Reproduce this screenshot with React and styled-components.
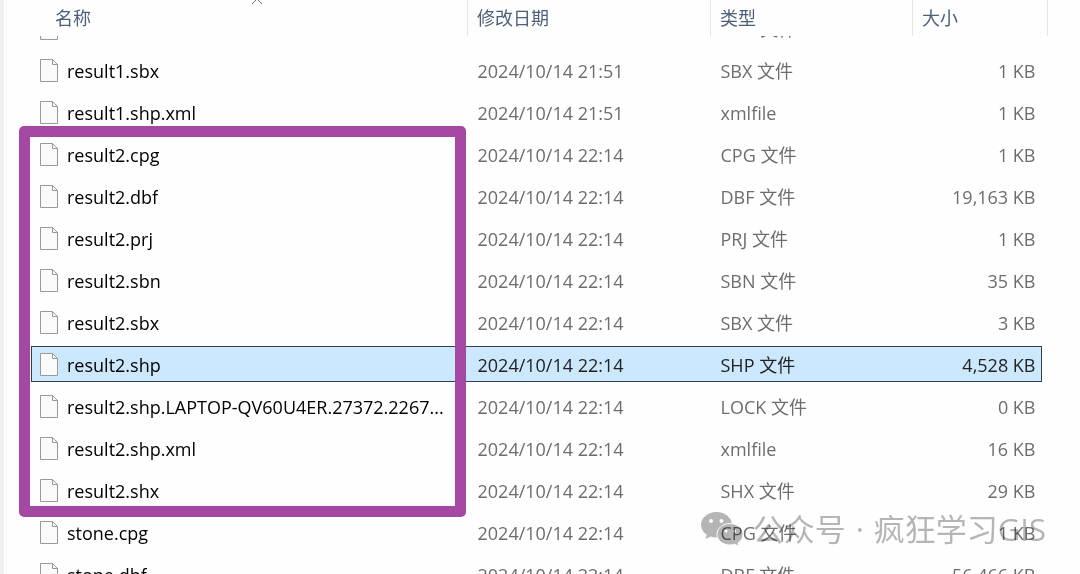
import React from "react";
import styled, { createGlobalStyle, css } from "styled-components";

const GlobalStyle = createGlobalStyle`
  * { box-sizing: border-box; }
  body {
    margin: 0;
    background: #fefefe;
    font-family: "Open Sans", "Noto Sans CJK SC", sans-serif;
    font-size: 18px;
    line-height: 24px;
  }
`;

const Explorer = styled.div`
  position: relative;
  display: flex;
  height: 100vh;
  overflow: hidden;
`;

const PaneEdge = styled.div`
  flex: none;
  width: 7px;
  background: linear-gradient(to right, #f0f0f0 4px, #fefefe 4px, #fefefe 6px, #f6f6f6 6px);
`;

const ListPane = styled.main`
  flex: 1;
  min-width: 0;
  padding: 0 32px 0 24px;
`;

const FileTable = styled.table`
  width: 100%;
  table-layout: fixed;
  border-collapse: collapse;
`;

const Column = styled.col`
  width: ${(p) => p.$width || "auto"};
`;

const HeaderCell = styled.th`
  position: relative;
  height: 36px;
  padding: 0 0 0 ${(p) => (p.$first ? 24 : 9)}px;
  border-right: 1px solid #e5e5e5;
  color: #4c607a;
  font-weight: 400;
  text-align: left;
`;

const SortMark = styled.svg`
  position: absolute;
  top: 0;
  left: calc(50% + 2px);
  width: 12px;
  height: 5px;
`;

const Cell = styled.td`
  padding: ${(p) => (p.$clipped ? "0" : "3px 0")};
  ${(p) => p.$last && "padding-right: 6px;"}
`;

const CellBody = styled.div`
  display: flex;
  align-items: center;
  height: 36px;
  padding: 0 6px 0 ${(p) => (p.$name ? 9 : 10)}px;
  border: 0 solid #35404a;
  color: ${(p) => (p.$name ? "#000" : "#6d6d6d")};
  white-space: nowrap;
  ${(p) => p.$last && css`justify-content: flex-end;`}
  ${(p) => p.$selected && css`
    background: #cce8ff;
    border-width: 1px 0;
    color: ${p.$name ? "#000" : "#222"};
  `}
  ${(p) => p.$selected && p.$name && css`
    border-left-width: 1px;
    padding-left: 8px;
  `}
  ${(p) => p.$selected && p.$last && css`
    border-right-width: 1px;
    padding-right: 5px;
    border-radius: 0 1px 1px 0;
  `}
`;

const Clip = styled.div`
  display: flex;
  flex-direction: column;
  justify-content: flex-end;
  height: 13px;
  padding-bottom: 3px;
  overflow: clip;

  > * { flex: none; }
`;

const CellText = styled.span`
  padding-top: 2px;
`;

const FileName = styled(CellText)`
  min-width: 0;
  margin-left: 9px;
  overflow: hidden;
  text-overflow: ellipsis;
`;

const FileIcon = styled.svg`
  flex: none;
  width: 18px;
  height: 23px;
`;

const Highlight = styled.div`
  position: absolute;
  top: 126px;
  left: 19px;
  width: calc(100% - 633px);
  height: 391px;
  border: 11px solid #a349a4;
  border-radius: 5px;
`;

const Watermark = styled.div`
  position: absolute;
  right: 34px;
  bottom: 23px;
  display: flex;
  align-items: center;
  gap: 10px;
  color: #b6b6b6;
  font-size: 31px;
  line-height: 44px;
  white-space: nowrap;
  mix-blend-mode: multiply;
`;

const WeChatMark = styled.svg`
  width: 42px;
  height: 35px;
`;

const files = [
  ["result1.sbn", "2024/10/14 21:51", "SBN 文件", "1 KB"],
  ["result1.sbx", "2024/10/14 21:51", "SBX 文件", "1 KB"],
  ["result1.shp.xml", "2024/10/14 21:51", "xmlfile", "1 KB"],
  ["result2.cpg", "2024/10/14 22:14", "CPG 文件", "1 KB"],
  ["result2.dbf", "2024/10/14 22:14", "DBF 文件", "19,163 KB"],
  ["result2.prj", "2024/10/14 22:14", "PRJ 文件", "1 KB"],
  ["result2.sbn", "2024/10/14 22:14", "SBN 文件", "35 KB"],
  ["result2.sbx", "2024/10/14 22:14", "SBX 文件", "3 KB"],
  ["result2.shp", "2024/10/14 22:14", "SHP 文件", "4,528 KB"],
  ["result2.shp.LAPTOP-QV60U4ER.27372.2267...", "2024/10/14 22:14", "LOCK 文件", "0 KB"],
  ["result2.shp.xml", "2024/10/14 22:14", "xmlfile", "16 KB"],
  ["result2.shx", "2024/10/14 22:14", "SHX 文件", "29 KB"],
  ["stone.cpg", "2024/10/14 22:14", "CPG 文件", "1 KB"],
  ["stone.dbf", "2024/10/14 22:14", "DBF 文件", "56,466 KB"],
];

function BlankFile() {
  return (
    <FileIcon viewBox="0 0 18 23" aria-hidden="true">
      <path d="M.5 .5H12.5L17.5 5.5V22.5H.5Z" fill="#fafafa" stroke="#999" />
      <path d="M12.5 .5V5.5H17.5" fill="none" stroke="#999" />
    </FileIcon>
  );
}

function FileRow({ file, clipped, selected }) {
  return (
    <tr>
      {file.map((text, i) => {
        const last = i === file.length - 1;
        const body = (
          <CellBody $name={i === 0} $last={last} $selected={selected}>
            {i === 0 ? (
              <>
                <BlankFile />
                <FileName>{text}</FileName>
              </>
            ) : (
              <CellText>{text}</CellText>
            )}
          </CellBody>
        );
        return (
          <Cell key={i} $clipped={clipped} $last={last}>
            {clipped ? <Clip>{body}</Clip> : body}
          </Cell>
        );
      })}
    </tr>
  );
}

export default function App() {
  return (
    <Explorer>
      <GlobalStyle />
      <PaneEdge />
      <ListPane>
        <FileTable>
          <colgroup>
            <Column />
            <Column $width="243px" />
            <Column $width="202px" />
            <Column $width="135px" />
          </colgroup>
          <thead>
            <tr>
              <HeaderCell $first scope="col">
                名称
                <SortMark viewBox="0 0 12 5" aria-hidden="true">
                  <path d="M1 4L6 -1L11 4" fill="none" stroke="#777" />
                </SortMark>
              </HeaderCell>
              <HeaderCell scope="col">修改日期</HeaderCell>
              <HeaderCell scope="col">类型</HeaderCell>
              <HeaderCell scope="col">大小</HeaderCell>
            </tr>
          </thead>
          <tbody>
            {files.map((file, i) => (
              <FileRow key={file[0]} file={file} clipped={i === 0} selected={file[0] === "result2.shp"} />
            ))}
          </tbody>
        </FileTable>
      </ListPane>
      <Highlight />
      <Watermark>
        <WeChatMark viewBox="0 0 42 35" aria-hidden="true">
          <path
            d="M15.500 0C7 0 0 5.700 0 12.800C0 16.900 2.200 20.300 5.800 22.700L4.500 27L9.600 24.500C11.300 25 13.300 25.400 15.500 25.400C24 25.400 31 19.800 31 12.800S24 0 15.500 0Z"
            fill="currentColor"
          />
          <path
            d="M29 11.500C21.700 11.500 16 16.400 16 22.300S21.700 33 29 33C30.700 33 32.300 32.700 33.800 32.200L38 34.500L37 31C40 29 42 26 42 22.300C42 16.400 36.200 11.500 29 11.500Z"
            fill="currentColor"
            stroke="#fff"
          />
          <g fill="#fff">
            <circle cx="10" cy="9" r="2" />
            <circle cx="20.500" cy="9" r="2" />
            <circle cx="25" cy="19" r="1.600" />
            <circle cx="33.500" cy="19" r="1.600" />
          </g>
        </WeChatMark>
        <span>公众号</span>
        <span>·</span>
        <span>疯狂学习GIS</span>
      </Watermark>
    </Explorer>
  );
}
